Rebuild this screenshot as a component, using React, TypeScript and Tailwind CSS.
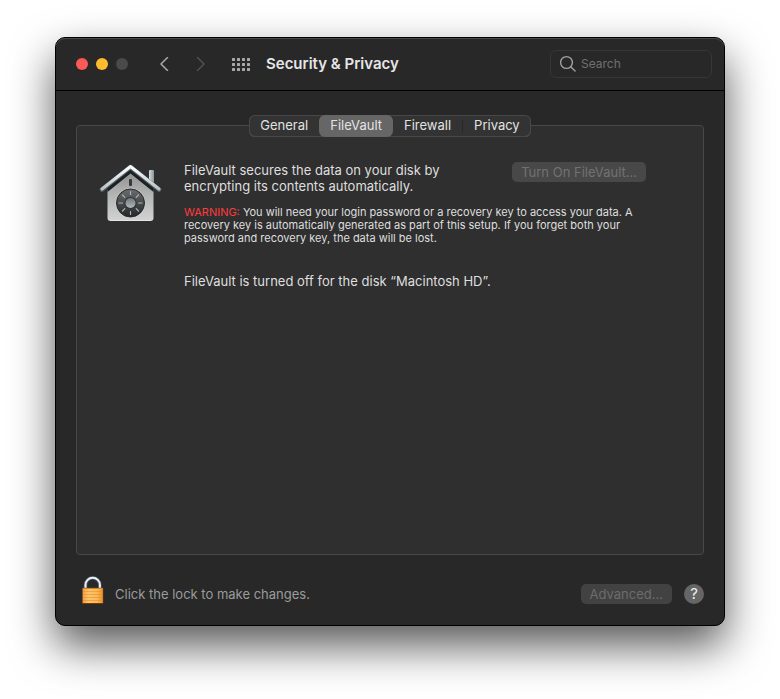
import React from "react";

const tabs = ["General", "FileVault", "Firewall", "Privacy"];

function HouseIcon() {
  return (
    <svg width="64" height="60" viewBox="0 0 64 60" aria-hidden="true" className="shrink-0">
      <defs>
        <linearGradient id="wall" x1="0" y1="0" x2="0" y2="1">
          <stop offset="0" stopColor="#8d8f8f" />
          <stop offset="0.5" stopColor="#b4b6b5" />
          <stop offset="1" stopColor="#d2d3d2" />
        </linearGradient>
        <linearGradient id="roof" x1="0" y1="0" x2="0" y2="1">
          <stop offset="0" stopColor="#ffffff" />
          <stop offset="1" stopColor="#b9c2c4" />
        </linearGradient>
        <linearGradient id="chimney" x1="0" y1="0" x2="1" y2="0">
          <stop offset="0" stopColor="#d4dcde" />
          <stop offset="1" stopColor="#8c9496" />
        </linearGradient>
        <linearGradient id="dial" x1="0" y1="0" x2="0" y2="1">
          <stop offset="0" stopColor="#6a6d6e" />
          <stop offset="1" stopColor="#242627" />
        </linearGradient>
        <linearGradient id="knob" x1="0" y1="0" x2="0" y2="1">
          <stop offset="0" stopColor="#70787a" />
          <stop offset="1" stopColor="#b4babb" />
        </linearGradient>
      </defs>
      <rect x="50" y="6" width="5" height="17" rx="1" fill="url(#chimney)" />
      <path d="M8.500 26 31.500 6l23 20v28a3 3 0 0 1-3 3h-40a3 3 0 0 1-3-3z" fill="url(#wall)" />
      <path d="M8.500 28v-5L31.500 4l23 19v5L31.500 9.500z" fill="#1c2224" />
      <path d="M11 56.500h41" stroke="#e6e6e6" strokeWidth="1" />
      <path d="M3 25.500 31.500 3 60 25.500" fill="none" stroke="#59656a" strokeWidth="4.500" strokeLinecap="round" strokeLinejoin="round" />
      <path d="M3 25 31.500 2.500 60 25" fill="none" stroke="url(#roof)" strokeWidth="3" strokeLinecap="round" strokeLinejoin="round" />
      <rect x="30" y="15" width="3" height="7" rx="1" fill="#34393a" />
      <circle cx="31.500" cy="39" r="15" fill="#d9dbda" opacity="0.5" />
      <circle cx="31.500" cy="39" r="14" fill="url(#dial)" stroke="#27292a" strokeWidth="1" />
      <g stroke="#b0b4b4" strokeWidth="1.200" strokeLinecap="round">
        <path d="M31.500 27.500v3M31.500 47.500v3M20 39h3.500M39.500 39h3.500M23.500 31l2.300 2.300M37.200 44.700l2.300 2.300M39.500 31l-2.300 2.300M25.800 44.700l-2.300 2.300" />
      </g>
      <circle cx="31.500" cy="39" r="6" fill="#303435" />
      <circle cx="31.500" cy="39" r="5" fill="url(#knob)" />
    </svg>
  );
}

function LockIcon() {
  return (
    <svg width="22" height="28" viewBox="0 0 22 28" aria-hidden="true">
      <defs>
        <linearGradient id="brass" x1="0" y1="0" x2="1" y2="0">
          <stop offset="0" stopColor="#f0a040" />
          <stop offset="0.3" stopColor="#ffc569" />
          <stop offset="0.7" stopColor="#fdb955" />
          <stop offset="1" stopColor="#e8922c" />
        </linearGradient>
      </defs>
      <path d="M3.500 13V9a7.200 7.200 0 0 1 14.400 0v4" fill="none" stroke="#4e5b66" strokeWidth="3.500" />
      <path d="M3.500 13V9a7.200 7.200 0 0 1 14.400 0v4" fill="none" stroke="#e9f1f7" strokeWidth="2" />
      <rect x="0.500" y="12" width="20.500" height="15.500" rx="0.500" fill="url(#brass)" stroke="#9b4f10" strokeWidth="0.500" />
      <path d="M1 12.500h20" stroke="#c9842f" />
      <path d="M1 15.500h20M1 18.500h20M1 21.500h20M1 24.500h20" stroke="#d98a30" opacity="0.500" />
      <path d="M0.500 27.500h20.500" stroke="#7a3808" />
    </svg>
  );
}

function TitleBar() {
  return (
    <header className="flex h-[53px] items-center rounded-t-[9px] border-b border-black pr-3 pl-5 shadow-[inset_0_1px_0_#484848]">
      <div className="flex gap-2">
        <button type="button" aria-label="Close" className="size-3 rounded-full bg-[#ff5a57]" />
        <button type="button" aria-label="Minimize" className="size-3 rounded-full bg-[#febc2e]" />
        <button type="button" aria-label="Zoom" disabled className="size-3 rounded-full bg-[#4a4a4a]" />
      </div>
      <nav className="ml-8 flex items-center" aria-label="History">
        <button type="button" aria-label="Back" className="text-[#a9a9a9]">
          <svg width="9" height="14" viewBox="0 0 9 14" fill="none" stroke="currentColor" strokeWidth="1.500" strokeLinecap="round" strokeLinejoin="round">
            <path d="M7.500 0.500 1 7l6.500 6.500" />
          </svg>
        </button>
        <button type="button" aria-label="Forward" disabled className="ml-[27px] text-[#505050]">
          <svg width="9" height="14" viewBox="0 0 9 14" fill="none" stroke="currentColor" strokeWidth="1.500" strokeLinecap="round" strokeLinejoin="round">
            <path d="M1.500 0.500 8 7l-6.500 6.500" />
          </svg>
        </button>
        <button type="button" aria-label="Show all" className="ml-[27px] text-[#a9a9a9]">
          <svg width="18" height="13" viewBox="0 0 18 13" fill="currentColor">
            {[0, 5, 10].map((y) =>
              [0, 5, 10, 15].map((x) => <rect key={`${x}-${y}`} x={x} y={y} width="3" height="3" rx="0.500" />)
            )}
          </svg>
        </button>
      </nav>
      <h1 className="ml-4 text-[15px] font-semibold text-[#e6e6e6]">Security &amp; Privacy</h1>
      <label className="ml-auto flex h-7 w-[162px] items-center gap-1 rounded-md border border-[#363636] px-2">
        <svg width="18" height="18" viewBox="0 0 18 18" fill="none" stroke="#a0a0a0" strokeWidth="1.400" strokeLinecap="round" aria-hidden="true" className="shrink-0">
          <circle cx="7.500" cy="7.500" r="5.900" />
          <path d="m11.900 11.900 4.200 4.200" />
        </svg>
        <input
          type="text"
          aria-label="Search"
          placeholder="Search"
          className="w-full min-w-0 bg-transparent text-[12px] text-[#dddddd] outline-none placeholder:text-[#707070]"
        />
      </label>
    </header>
  );
}

function Tabs() {
  return (
    <div role="tablist" className="z-10 mx-auto -mb-3 flex h-[22px] items-center rounded-md bg-[#333333] shadow-[inset_0_0_0_1px_#484848,inset_0_-1px_0_#5a5a5a]">
      {tabs.map((tab) => (
        <React.Fragment key={tab}>
          {tab === "Privacy" && <span className="h-3 w-px bg-[#282828]" />}
          <button
            type="button"
            role="tab"
            aria-selected={tab === "FileVault"}
            className="h-[22px] rounded-md px-[11px] pb-0.5 text-[13px] leading-5 text-[#e2e2e2] aria-selected:bg-[#666666]"
          >
            {tab}
          </button>
        </React.Fragment>
      ))}
    </div>
  );
}

export default function App() {
  return (
    <div className="bg-white px-[55px] pt-[37px] pb-[73px] font-['Inter','Liberation_Sans',sans-serif] text-[13px] leading-4 text-[#dfdfdf]">
      <main className="rounded-[10px] border border-black bg-[#282828] shadow-[0_20px_44px_rgba(0,0,0,0.66)]">
        <TitleBar />
        <div className="flex flex-col px-5 pt-6">
          <Tabs />
          <section className="flex min-h-[430px] items-start gap-5 rounded-[4px] border border-[#484848] bg-[#2f2f2f] pt-9 pr-[23px] pl-[22px]">
            <div className="pt-0.5">
              <HouseIcon />
            </div>
            <div className="ml-px max-w-[462px] flex-1">
              <div className="flex items-start justify-between">
                <p className="w-[270px]">FileVault secures the data on your disk by encrypting its contents automatically.</p>
                <button type="button" disabled className="h-5 rounded-[5px] bg-[#484848] px-[9px] leading-[18px] text-[#727272]">
                  Turn On FileVault...
                </button>
              </div>
              <p className="mt-3 text-[11px] leading-[13px]">
                <span className="text-[#ff3b3b]">WARNING:</span> You will need your login password or a recovery key to access
                your data. A recovery key is automatically generated as part of this setup. If you forget both your password
                and recovery key, the data will be lost.
              </p>
              <p className="mt-7">FileVault is turned off for the disk “Macintosh HD”.</p>
            </div>
          </section>
          <footer className="flex items-end pt-[21px] pb-[21px] leading-5">
            <button type="button" className="flex items-end gap-[11px] pl-[6px] text-[#9b9b9b]">
              <LockIcon />
              Click the lock to make changes.
            </button>
            <button type="button" disabled className="ml-auto h-5 rounded-[5px] bg-[#424242] px-[9px] text-[#6c6c6c]">
              Advanced...
            </button>
            <button type="button" aria-label="Help" className="ml-3 size-5 rounded-full bg-[#666666] text-[15px] text-[#eeeeee]">
              ?
            </button>
          </footer>
        </div>
      </main>
    </div>
  );
}
